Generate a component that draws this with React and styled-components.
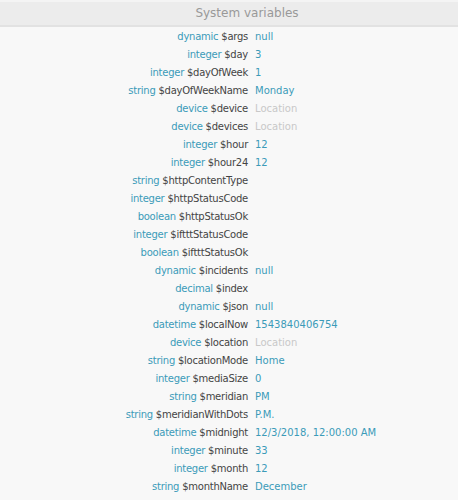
import React from "react";
import styled, { createGlobalStyle } from "styled-components";

const GlobalStyle = createGlobalStyle`
  html, body {
    margin: 0;
    padding: 0;
    background: #f8f8f8;
  }
  body {
    font-family: "DejaVu Sans", Verdana, sans-serif;
  }
`;

const Panel = styled.div`
  min-height: 500px;
  background: #f8f8f8;
`;

const Header = styled.div`
  height: 23px;
  line-height: 23px;
  margin-top: 2px;
  padding-left: 36px;
  border-bottom: 2px solid #e2e2e2;
  background: #ececec;
  color: #999;
  font-size: 12px;
  text-align: center;
  box-shadow: 0 -2px 0 #f4f4f4;
`;

const VarList = styled.div`
  display: grid;
  grid-template-columns: 248px 1fr;
  column-gap: 7px;
  grid-auto-rows: 18px;
  align-items: center;
  font-size: 10px;
  white-space: nowrap;
  overflow: hidden;
`;

const Name = styled.div`
  text-align: right;
  color: #444;
  letter-spacing: -0.25px;
`;

const Type = styled.span`
  color: #3b9bb8;
`;

const Value = styled.div`
  color: ${(p) => (p.$muted ? "#c8c8c8" : "#3b9bb8")};
`;

const vars = [
  ["dynamic", "args", "null"],
  ["integer", "day", "3"],
  ["integer", "dayOfWeek", "1"],
  ["string", "dayOfWeekName", "Monday"],
  ["device", "device", "Location", true],
  ["device", "devices", "Location", true],
  ["integer", "hour", "12"],
  ["integer", "hour24", "12"],
  ["string", "httpContentType", ""],
  ["integer", "httpStatusCode", ""],
  ["boolean", "httpStatusOk", ""],
  ["integer", "iftttStatusCode", ""],
  ["boolean", "iftttStatusOk", ""],
  ["dynamic", "incidents", "null"],
  ["decimal", "index", ""],
  ["dynamic", "json", "null"],
  ["datetime", "localNow", "1543840406754"],
  ["device", "location", "Location", true],
  ["string", "locationMode", "Home"],
  ["integer", "mediaSize", "0"],
  ["string", "meridian", "PM"],
  ["string", "meridianWithDots", "P.M."],
  ["datetime", "midnight", "12/3/2018, 12:00:00 AM"],
  ["integer", "minute", "33"],
  ["integer", "month", "12"],
  ["string", "monthName", "December"],
];

const App = () => {
  return (
    <>
      <GlobalStyle />
      <Panel>
        <Header>System variables</Header>
        <VarList>
          {vars.map(([type, name, value, muted]) => (
            <React.Fragment key={name}>
              <Name>
                <Type>{type}</Type> ${name}
              </Name>
              <Value $muted={muted}>{value}</Value>
            </React.Fragment>
          ))}
        </VarList>
      </Panel>
    </>
  );
};

export default App;
